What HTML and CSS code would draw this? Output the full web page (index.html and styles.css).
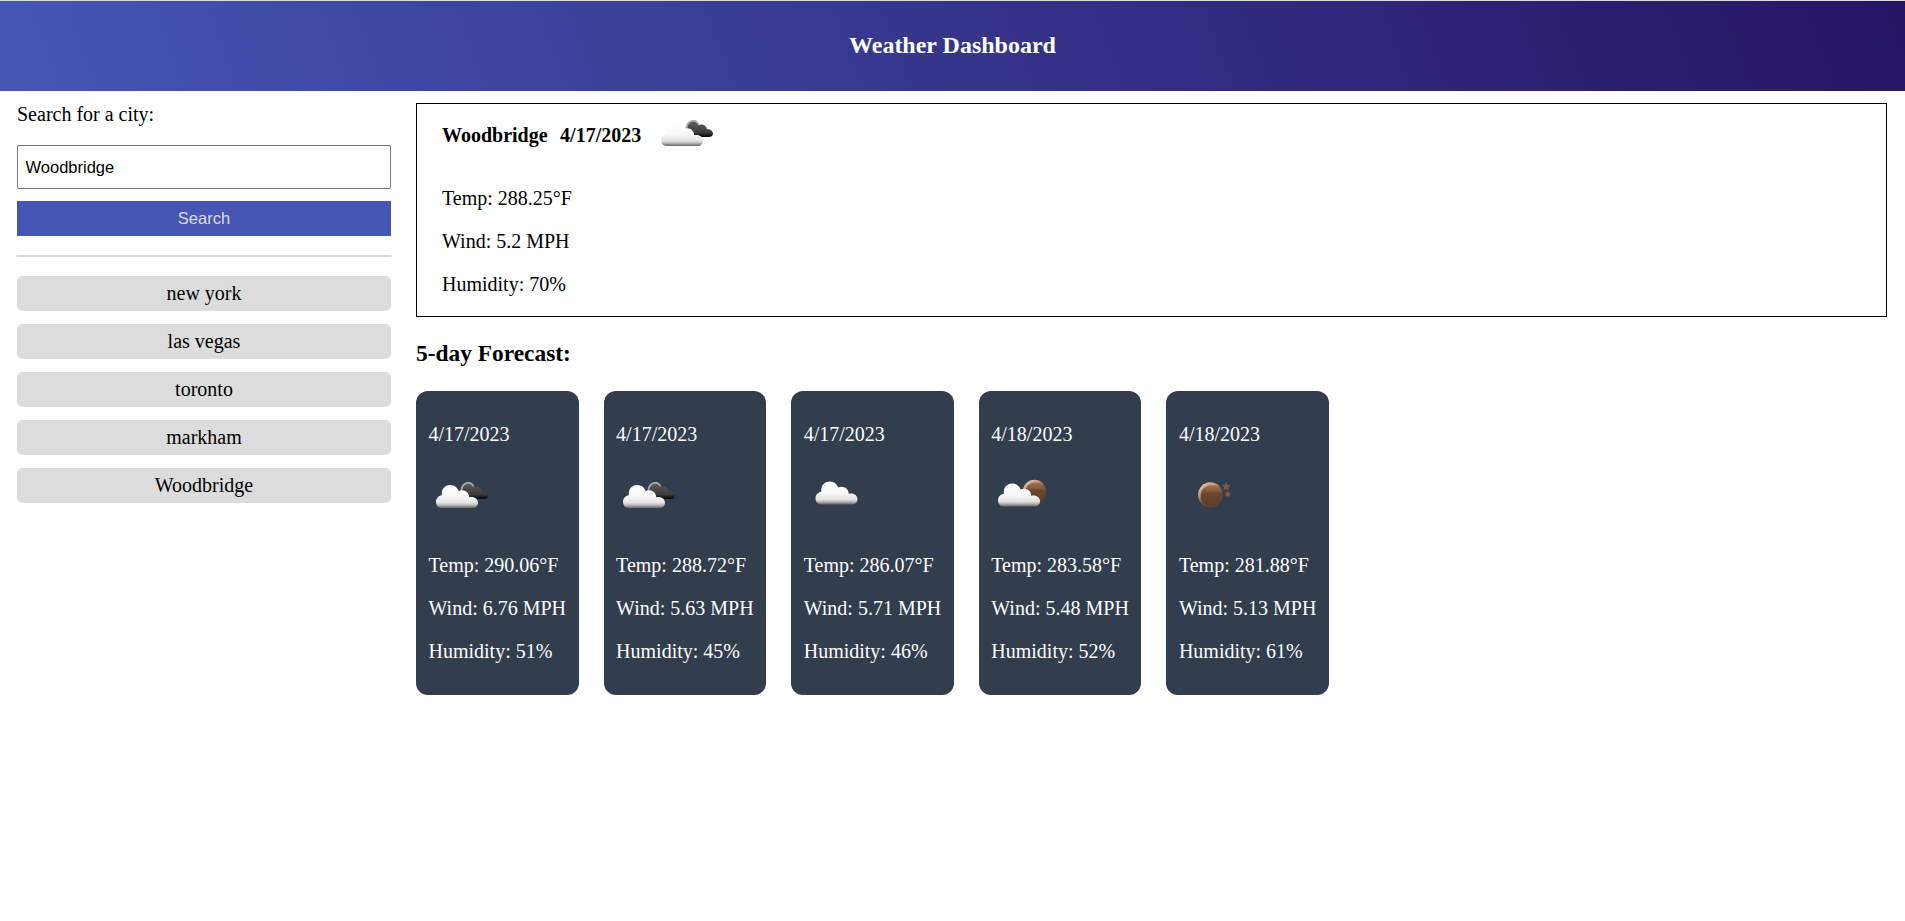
FILE: index.html
```html
<!DOCTYPE html>
<html lang="en">
<head>
<meta charset="utf-8">
<title>Weather Dashboard</title>
<link rel="stylesheet" href="styles.css">
</head>
<body>
<svg class="defs" aria-hidden="true">
  <defs>
    <linearGradient id="white" x1="0" y1="0" x2="0" y2="1">
      <stop offset="0" stop-color="#fff"/><stop offset=".5" stop-color="#f8f8f8"/><stop offset=".78" stop-color="#e2e2e2"/><stop offset=".87" stop-color="#bbb"/><stop offset="1" stop-color="#666"/>
    </linearGradient>
    <linearGradient id="dark" x1="0" y1="0" x2="0" y2="1">
      <stop offset="0" stop-color="#5c5c5c"/><stop offset=".7" stop-color="#3c3c3c"/><stop offset="1" stop-color="#080808"/>
    </linearGradient>
    <linearGradient id="moon" x1="0" y1="0" x2="0" y2="1">
      <stop offset="0" stop-color="#a87553"/><stop offset=".25" stop-color="#8a5c3d"/><stop offset=".4" stop-color="#6b472f"/><stop offset="1" stop-color="#5b3f2a"/>
    </linearGradient>
    <linearGradient id="shine" x1="0" y1="0" x2=".7" y2="1">
      <stop offset="0" stop-color="#f3dfd5"/><stop offset=".35" stop-color="#c49a82"/><stop offset=".65" stop-color="#74492f"/><stop offset="1" stop-color="#5b3f2a"/>
    </linearGradient>
    <filter id="soft" x="-10%" y="-10%" width="120%" height="120%"><feGaussianBlur stdDeviation=".4"/></filter>
    <path id="cloud" d="M15.500 43C12.300 43 10 40.300 10 36.800C10 33.400 12.300 30.900 15.800 30.200C15.200 24.200 18.800 20 24.200 20C28.500 20 31.700 22.800 32.600 26C37.600 23.800 43.300 26.800 43.200 32.300C47.800 31 52 33.700 52 37.700C52 40.800 49.700 43 46.500 43Z"/>
    <g id="broken" filter="url(#soft)">
      <path d="M34.500 26.500C34.500 20.500 38 17 42 17C45.500 17 48 19 48.300 22L45 21C41 18.500 37 21 36.500 26Z" fill="#aaa"/>
      <path d="M36.500 25.500C36.700 20.800 39.500 18.500 42.500 18.700C44.700 18.800 46.500 20.300 47.300 22.300C50.500 20.500 55.500 22 56 26.300C59 25.800 62 27.800 62 30.600C62 32.800 60.500 34 58 34H43.500C42.500 29 39.500 27 36.500 25.500Z" fill="url(#dark)"/>
      <use href="#cloud" fill="url(#white)"/>
    </g>
  </defs>
</svg>
<header class="header"><h1 class="title">Weather Dashboard</h1></header>
<div class="layout">
  <aside class="sidebar">
    <label class="label" for="city">Search for a city:</label>
    <input class="input" id="city" type="text" value="Woodbridge">
    <button class="search">Search</button>
    <hr class="rule">
    <div class="history">
      <div class="past">new york</div>
      <div class="past">las vegas</div>
      <div class="past">toronto</div>
      <div class="past">markham</div>
      <div class="past">Woodbridge</div>
    </div>
  </aside>
  <main class="main">
    <section class="current">
      <div class="heading">
        <span>Woodbridge</span><span class="date">4/17/2023</span>
        <svg class="icon icon-small" viewBox="3 1 68 63"><use href="#broken"/></svg>
      </div>
      <p>Temp: 288.25°F</p>
      <p>Wind: 5.2 MPH</p>
      <p>Humidity: 70%</p>
    </section>
    <h3 class="subtitle">5-day Forecast:</h3>
    <section class="cards">
      <article class="card">
        <p>4/17/2023</p>
        <svg class="icon" viewBox="3 1 68 68"><use href="#broken"/></svg>
        <p>Temp: 290.06°F</p><p>Wind: 6.76 MPH</p><p>Humidity: 51%</p>
      </article>
      <article class="card">
        <p>4/17/2023</p>
        <svg class="icon" viewBox="3 1 68 68"><use href="#broken"/></svg>
        <p>Temp: 288.72°F</p><p>Wind: 5.63 MPH</p><p>Humidity: 45%</p>
      </article>
      <article class="card">
        <p>4/17/2023</p>
        <svg class="icon" viewBox="3 1 68 68"><use href="#cloud" fill="url(#white)" filter="url(#soft)" transform="translate(4.500 -3.500)"/></svg>
        <p>Temp: 286.07°F</p><p>Wind: 5.71 MPH</p><p>Humidity: 46%</p>
      </article>
      <article class="card">
        <p>4/18/2023</p>
        <svg class="icon" viewBox="3 1 68 68">
          <g filter="url(#soft)">
            <circle cx="46.500" cy="26.500" r="11.700" fill="url(#shine)"/>
            <circle cx="47.300" cy="27.500" r="10.200" fill="url(#moon)"/>
            <use href="#cloud" fill="url(#white)" transform="translate(0 -1.500)"/>
          </g>
        </svg>
        <p>Temp: 283.58°F</p><p>Wind: 5.48 MPH</p><p>Humidity: 52%</p>
      </article>
      <article class="card">
        <p>4/18/2023</p>
        <svg class="icon" viewBox="3 1 68 68">
          <g filter="url(#soft)">
            <circle cx="34.500" cy="29.800" r="12.500" fill="url(#shine)"/>
            <circle cx="35.500" cy="30.700" r="10.800" fill="url(#moon)"/>
            <path d="M50.300 16.800L51.400 19.900L54.500 20.300L52.200 22.400L53 25.500L50.300 23.900L47.200 25L48 21.900L46 19.800L49 19.700Z" fill="#85583e"/>
            <path d="M52 25.600L52.900 27.700L55.300 28.100L53.600 29.800L54.100 32.100L51.900 31L49.400 31.700L50 29.400L48.500 27.800L50.900 27.600Z" fill="#85583e"/>
          </g>
        </svg>
        <p>Temp: 281.88°F</p><p>Wind: 5.13 MPH</p><p>Humidity: 61%</p>
      </article>
    </section>
  </main>
</div>
</body>
</html>
```

FILE: styles.css
```css
* { box-sizing: border-box; }
body {
  margin: 0;
  border-top: 1px solid #dadce0;
  background: #fff;
  color: #000;
  font: 20px/23px "Liberation Serif", "Times New Roman", serif;
}
.defs { position: absolute; width: 0; height: 0; }
.header {
  display: flex;
  align-items: center;
  justify-content: center;
  height: 90px;
  padding-bottom: 2px;
  background: linear-gradient(70deg, #4556b5, #261463);
  color: #fff;
}
.title { margin: 0; font-size: 24px; line-height: 27px; }
.layout {
  display: grid;
  grid-template-columns: 374px 1471px;
  gap: 25px;
  padding: 12px 0 0 17px;
}
.sidebar { display: flex; flex-direction: column; }
.label { margin-bottom: 19px; }
.input {
  height: 44px;
  padding: 1px 7.500px;
  border: 1px solid #767676;
  border-radius: 2px;
  font: 16.500px "Liberation Sans", Arial, sans-serif;
}
.search {
  height: 35px;
  margin-top: 12px;
  border: 0;
  background: #4556b5;
  color: #dcdcdc;
  font: 16.500px "Liberation Sans", Arial, sans-serif;
}
.rule { width: 100%; height: 2px; margin: 19px 0; border: 0; background: #dcdcdc; }
.history { display: flex; flex-direction: column; gap: 13px; }
.past {
  height: 35px;
  padding-top: 6px;
  border-radius: 6px;
  background: #dcdcdc;
  text-align: center;
}
p { margin: 20px 0; }
.current { height: 214px; padding: 0 25px; border: 1px solid #000; }
.heading { display: flex; height: 63px; padding-top: 20px; font-weight: 700; }
.date { margin-left: 12.500px; }
.icon { display: block; width: 68px; height: 68px; }
.icon-small { height: 63px; margin: -20px 0 0 12.500px; }
.subtitle { margin: 23px 0 24px; font-size: 23.400px; line-height: 27px; }
.cards { display: flex; gap: 25px; }
.card {
  width: 162.600px;
  height: 304px;
  padding: 12px 12px 12px 12.500px;
  border-radius: 12px;
  background: #323d4e;
  color: #fff;
  white-space: nowrap;
}
```
